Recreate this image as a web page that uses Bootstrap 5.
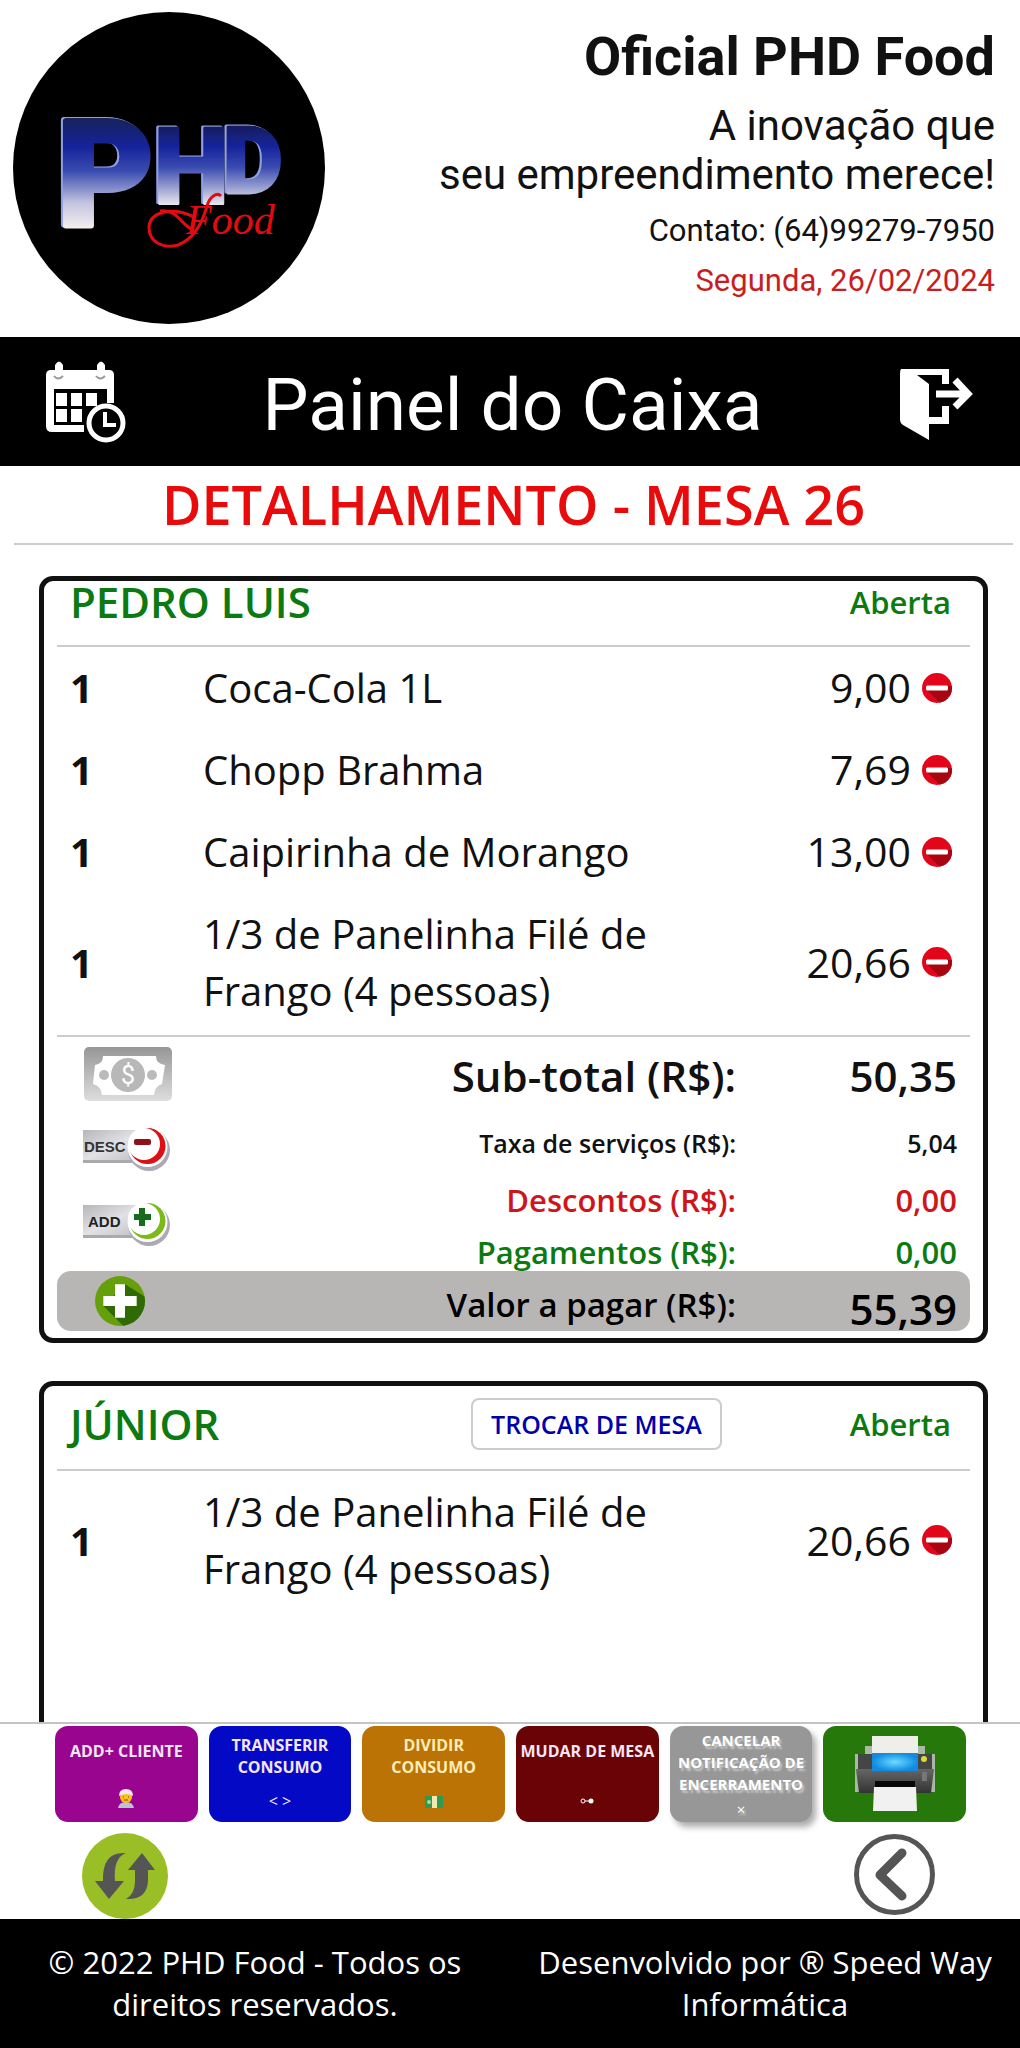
<!DOCTYPE html>
<html lang="pt-BR">
<head>
<meta charset="utf-8">
<meta name="viewport" content="width=device-width, initial-scale=1">
<title>PHD Food - Painel do Caixa</title>
<link href="https://cdn.jsdelivr.net/npm/bootstrap@5.3.0/dist/css/bootstrap.min.css" rel="stylesheet">
<style>
body{font-family:"Open Sans","Noto Sans",sans-serif;color:#111;background:#fff}
svg{display:block;flex:none}
.brandhead,.titlebar{font-family:Roboto,sans-serif}
.brandhead{padding:12px 25px 13px 13px}
.brandname{font-size:54px;line-height:64px;font-weight:700;margin-top:13px}
.slogan{font-size:42px;line-height:49px;margin:12px 0 7px}
.contact{font-size:31px;line-height:50px}
.contact.day{color:#c81e22}
.titlebar{background:#000;color:#fff;height:129px;padding:0 47px 0 46px}
.titlebar h1{font-size:73px;line-height:84px;font-weight:400;margin:0;padding-top:6px}
.content{scrollbar-width:none;min-height:0}
.content::-webkit-scrollbar{display:none}
.heading{font-size:54px;line-height:77px;font-weight:600;color:#e90b0b;border-bottom:2px solid #ccc;margin:0 7px 0 14px;text-align:center}
.tab{border:5px solid #111;border-radius:14px;margin:31px 32px 38px 39px;padding:0 13px}
.tabhead{padding:0 19px 0 13px;border-bottom:2px solid #ccc;height:66px}
.tabhead.tall{height:85px;padding-bottom:7px}
.client{font-size:42px;line-height:42px;font-weight:600;color:#0b7a10;margin:0}
.state{font-size:31px;line-height:42px;font-weight:600;color:#0b7a10}
.swap{font-size:25px;line-height:32px;font-weight:600;color:#00a;border:2px solid #ccc;border-radius:8px;padding:8px 18px;background:#fff;margin-left:auto;margin-right:128px}
.item{padding:12px 18px 13px 13px;font-size:40px;line-height:57px}
.qty{width:133px;font-weight:700}
.dish{width:500px}
.cost{font-size:41px;padding-right:11px}
.lines{border-top:2px solid #ccc;margin-top:3px}
.tools{width:120px;padding:10px 0 0 26px}
.sum{font-weight:600;padding:12px 13px 0 0}
.lbl{width:221px;flex:none;text-align:right}
.s42{font-size:42px;line-height:54px}
.s25{font-size:25px;line-height:36px;padding:22px 0 6px}
.s31{font-size:31px;line-height:38px;padding-top:14px}
.s33{font-size:33px;line-height:52px}
.cut{color:#d0151a}.paid{color:#0b7a10}
.due{background:#b8b6b4;border-radius:14px;height:60px;padding:0 13px 0 38px;color:#000;font-weight:600;margin-bottom:7px}
.plain{border:0;background:none;padding:0}
.dock{border-top:2px solid #c4c4c4;background:#fff}
.actions{gap:11px;padding:2px 54px 0 55px}
.act{flex:1 1 0;height:96px;border:0;border-radius:13px;color:#f5e6f5;font-size:16px;line-height:22px;font-weight:700;padding:0;display:flex;flex-direction:column;align-items:center;justify-content:space-between;padding:8px 0 10px;white-space:nowrap}
.act svg{margin-bottom:4px}
.c1{background:#99058f;padding-top:14px}.c2{background:#0409c6}.c3{background:#ba7304;color:#ffedb8}.c4{background:#690305;padding-top:14px}
.c5{background:#979797;color:#fff;box-shadow:4px 5px 6px #0005;text-shadow:2px 3px 2px #fff7;font-size:15px;padding:3px 0 2px}
.c6{background:#26780a;justify-content:center;padding:0}
.nav2{padding:11px 85px 0 82px}
.foot{background:#000;color:#fff;font-size:31px;line-height:42px;padding:22px 0 23px;text-align:center}
</style>
</head>
<body>
<svg width="0" height="0" class="position-absolute" aria-hidden="true">
  <defs>
    <clipPath id="disc"><circle cx="15" cy="15" r="15"/></clipPath>
    <symbol id="minus" viewBox="0 0 30 30"><circle cx="15" cy="15" r="15" fill="#e3061a"/><path clip-path="url(#disc)" d="M5 17L18 30H30V13H26L25 17z" fill="#a80411"/><rect x="4" y="12.500" width="22" height="5" rx="1.500" fill="#fff"/></symbol>
    <linearGradient id="plate" x2="1" y2="1"><stop stop-color="#b5b5ba"/><stop offset=".5" stop-color="#e2e2e6"/><stop offset="1" stop-color="#bcbcc2"/></linearGradient>
  </defs>
</svg>
<div class="vh-100 d-flex flex-column">
  <header>
    <div class="brandhead d-flex justify-content-between">
      <svg width="312" height="312" viewBox="13 12 312 312" role="img" aria-label="PHD Food">
        <defs><linearGradient id="chrome" gradientUnits="userSpaceOnUse" x1="0" y1="114" x2="0" y2="228"><stop stop-color="#1b2050"/><stop offset=".28" stop-color="#14229a"/><stop offset=".5" stop-color="#3a4bb0"/><stop offset=".78" stop-color="#c3c4e0"/><stop offset="1" stop-color="#f4eeee"/></linearGradient>
        <linearGradient id="chrome2" gradientUnits="userSpaceOnUse" x1="0" y1="120" x2="0" y2="206"><stop stop-color="#191d48"/><stop offset=".3" stop-color="#14229a"/><stop offset=".55" stop-color="#3a4bb0"/><stop offset="1" stop-color="#f0ecf0"/></linearGradient>
        <filter id="edge"><feDropShadow dx="-2" dy="-1" stdDeviation=".5" flood-color="#8e9fe6"/></filter></defs>
        <circle cx="169" cy="168" r="156"/>
        <text font-family="Roboto,sans-serif" font-weight="900" stroke-width="6" stroke-linejoin="round" filter="url(#edge)"><tspan x="58" y="225" font-size="146" fill="url(#chrome)" stroke="url(#chrome)">P</tspan><tspan x="154" y="203" font-size="106" fill="url(#chrome2)" stroke="url(#chrome2)" stroke-width="3">H</tspan><tspan x="223" y="193" font-size="92" fill="url(#chrome2)" stroke="url(#chrome2)" stroke-width="3">D</tspan></text>
        <path d="M194 217C172 206 150 212 149 227C149 243 164 249 178 245C194 239 202 224 207 206C210 196 217 192 221 196" fill="none" stroke="#e30b12" stroke-width="3"/>
        <path d="M160 211C178 208 184 230 194 229" fill="none" stroke="#e30b12" stroke-width="3"/>
        <text x="186" y="234" font-family="Liberation Serif,serif" font-style="italic" font-size="42" fill="#e30b12">Food</text>
      </svg>
      <div class="text-end">
        <div class="brandname">Oficial PHD Food</div>
        <div class="slogan">A inovação que<br>seu empreendimento merece!</div>
        <div class="contact">Contato: (64)99279-7950</div>
        <div class="contact day">Segunda, 26/02/2024</div>
      </div>
    </div>
    <div class="titlebar d-flex align-items-center justify-content-between">
      <button class="plain" aria-label="Agenda"><svg width="80" height="82" viewBox="0 0 80 82"><path d="M5 9h4V4q4-7 8 0v5h34V4q4-7 8 0v5h4q5 0 5 5v28h-7V28H8v36h30v7H6q-6 0-6-6V14q0-5 5-5z" fill="#fff"/><path d="M10 32h11v13H10zM25 32h11v13H25zM40 32h11v13H40zM10 48h11v13H10zM25 48h11v13H25z" fill="#fff"/><path d="M8 15q4 5 9 0M50 15q4 5 9 0" stroke="#999" stroke-width="2" fill="none"/><circle cx="60" cy="62" r="17" fill="#000" stroke="#fff" stroke-width="5"/><path d="M59 51v13h11" fill="none" stroke="#fff" stroke-width="4"/></svg></button>
      <h1>Painel do Caixa</h1>
      <button class="plain pt-1" aria-label="Sair"><svg width="74" height="72" viewBox="0 0 74 72"><path d="M2 1H50V16H43V7H18L30 16V49H43V38H50V56H30V72L4 57Q1 55 1 52V6Q1 2 2 1z" fill="#fff"/><path d="M37 26H68M56 12L69 26L56 39" fill="none" stroke="#fff" stroke-width="7"/></svg></button>
    </div>
  </header>
  <main class="content flex-grow-1 overflow-auto">
    <h2 class="heading">DETALHAMENTO - MESA 26</h2>
    <section class="tab">
      <div class="tabhead d-flex justify-content-between align-items-start"><h3 class="client">PEDRO LUIS</h3><span class="state">Aberta</span></div>
      <div class="item d-flex align-items-center"><span class="qty">1</span><span class="dish">Coca-Cola 1L</span><span class="cost ms-auto">9,00</span><button class="plain" aria-label="Remover"><svg width="30" height="30"><use href="#minus"/></svg></button></div>
      <div class="item d-flex align-items-center"><span class="qty">1</span><span class="dish">Chopp Brahma</span><span class="cost ms-auto">7,69</span><button class="plain" aria-label="Remover"><svg width="30" height="30"><use href="#minus"/></svg></button></div>
      <div class="item d-flex align-items-center"><span class="qty">1</span><span class="dish">Caipirinha de Morango</span><span class="cost ms-auto">13,00</span><button class="plain" aria-label="Remover"><svg width="30" height="30"><use href="#minus"/></svg></button></div>
      <div class="item d-flex align-items-center"><span class="qty">1</span><span class="dish">1/3 de Panelinha Filé de Frango (4 pessoas)</span><span class="cost ms-auto">20,66</span><button class="plain" aria-label="Remover"><svg width="30" height="30"><use href="#minus"/></svg></button></div>
      <div class="lines d-flex">
        <div class="tools d-flex flex-column">
          <button class="plain" aria-label="Pagamento"><svg width="90" height="55" viewBox="0 0 90 55"><defs><linearGradient id="bill" x2="0" y2="1"><stop stop-color="#969696"/><stop offset="1" stop-color="#dedede"/></linearGradient></defs><rect x="1" width="88" height="54" rx="5" fill="url(#bill)"/><path d="M20 9H73Q73 17 82 18L79 37Q72 39 71 48H19Q18 39 10 37L12 18Q20 17 20 9z" fill="#fff"/><circle cx="45" cy="28" r="17" fill="#b8b8b8"/><circle cx="21" cy="28" r="5" fill="#bbb"/><circle cx="69" cy="28" r="5" fill="#bbb"/><text x="45" y="37" text-anchor="middle" font-family="Roboto,sans-serif" font-size="25" fill="#fff">$</text></svg></button>
          <button class="plain mt-4" aria-label="Desconto"><svg width="90" height="47" viewBox="0 0 90 47"><rect y="5" width="62" height="32" fill="#aaa"/><rect y="4" width="62" height="30" fill="url(#plate)"/><circle cx="66" cy="24" r="21" fill="#aaa9b5"/><circle cx="64.500" cy="21" r="20" fill="#fff"/><circle cx="64.500" cy="20" r="18" fill="#dc1015"/><circle cx="61" cy="18" r="16" fill="#fff"/><rect x="51" y="13" width="17" height="6" rx="2" fill="#8d1117"/><text x="1" y="26" font-family="Liberation Sans,sans-serif" font-weight="700" font-size="15" fill="#333">DESC</text></svg></button>
          <button class="plain mt-4 pt-1" aria-label="Acréscimo"><svg width="90" height="47" viewBox="0 0 90 47"><rect y="5" width="62" height="32" fill="#aaa"/><rect y="4" width="62" height="30" fill="url(#plate)"/><circle cx="66" cy="24" r="21" fill="#aaa9b5"/><circle cx="64.500" cy="21" r="20" fill="#fff"/><circle cx="64.500" cy="20" r="18" fill="#7cba1b"/><circle cx="61" cy="18" r="16" fill="#fff"/><path d="M51 16H68M59 7V25" stroke="#156c1b" stroke-width="6"/><text x="5" y="26" font-family="Liberation Sans,sans-serif" font-weight="700" font-size="15" fill="#222">ADD</text></svg></button>
        </div>
        <div class="sum flex-grow-1">
          <div class="d-flex justify-content-end s42"><span>Sub-total (R$):</span><span class="lbl">50,35</span></div>
          <div class="d-flex justify-content-end s25"><span>Taxa de serviços (R$):</span><span class="lbl">5,04</span></div>
          <div class="d-flex justify-content-end s31 cut"><span>Descontos (R$):</span><span class="lbl">0,00</span></div>
          <div class="d-flex justify-content-end s31 paid"><span>Pagamentos (R$):</span><span class="lbl">0,00</span></div>
        </div>
      </div>
      <div class="due d-flex align-items-center">
        <button class="plain me-auto" aria-label="Adicionar item"><svg width="50" height="50" viewBox="0 0 30 30"><circle cx="15" cy="15" r="15" fill="#65a00b"/><path clip-path="url(#disc)" d="M5 18L18 31H31V13L18 5z" fill="#2f6a04"/><path d="M12 5H18V12H25V18H18V25H12V18H5V12H12z" fill="#fff"/></svg></button>
        <span class="s33 pt-2">Valor a pagar (R$):</span><span class="lbl s42 pt-3">55,39</span>
      </div>
    </section>
    <section class="tab pb-5">
      <div class="tabhead tall d-flex align-items-center"><h3 class="client">JÚNIOR</h3><button class="swap">TROCAR DE MESA</button><span class="state">Aberta</span></div>
      <div class="item d-flex align-items-center mb-5 pb-5"><span class="qty">1</span><span class="dish">1/3 de Panelinha Filé de Frango (4 pessoas)</span><span class="cost ms-auto">20,66</span><button class="plain" aria-label="Remover"><svg width="30" height="30"><use href="#minus"/></svg></button></div>
    </section>
  </main>
  <div class="dock">
    <div class="actions d-flex">
      <button class="act c1"><span>ADD+ CLIENTE</span><svg width="16" height="19" viewBox="0 0 16 19"><path d="M0 19q1-6 8-6t8 6z" fill="#b9c4cb"/><circle cx="8" cy="8" r="6" fill="#fbbf24"/><path d="M1 7q0-7 7-7t7 7q-7-4-14 0z" fill="#f1e8ef"/><path d="M5 8h1M10 8h1M6 11h4" stroke="#7b4b12"/></svg></button>
      <button class="act c2"><span>TRANSFERIR<br>CONSUMO</span><span class="fw-normal">&lt; &gt;</span></button>
      <button class="act c3"><span>DIVIDIR<br>CONSUMO</span><svg width="18" height="12" viewBox="0 0 18 12"><rect width="18" height="12" fill="#2f9b50"/><rect x="7" width="5" height="12" fill="#f2e8b0"/><circle cx="4" cy="6" r="2" fill="#a7dc9f"/></svg></button>
      <button class="act c4"><span>MUDAR DE MESA</span><svg class="mb-2" width="14" height="6" viewBox="0 0 14 6"><circle cx="3" cy="3" r="2" fill="none" stroke="#fff"/><path d="M5 3h5" stroke="#fff"/><circle cx="11" cy="3" r="2.500" fill="#fff"/></svg></button>
      <button class="act c5"><span>CANCELAR<br>NOTIFICAÇÃO DE<br>ENCERRAMENTO</span><span class="fw-normal">×</span></button>
      <button class="act c6" aria-label="Imprimir"><svg class="m-0" width="84" height="76" viewBox="0 0 84 76"><defs><linearGradient id="ink" x2="0" y2="1"><stop stop-color="#666"/><stop offset="1" stop-color="#333"/></linearGradient><radialGradient id="glow"><stop stop-color="#6cdcff"/><stop offset="1" stop-color="#108be0"/></radialGradient></defs><path d="M12 10h60v8h10v38H2V18h10z" fill="#a9b9a5"/><rect x="19" y="0" width="46" height="20" fill="#efefea"/><rect x="5" y="18" width="74" height="15" fill="#454545"/><path d="M3 33H81L78 57H6z" fill="url(#ink)"/><rect x="19" y="17" width="46" height="18" fill="url(#glow)"/><rect x="22" y="45" width="40" height="6" fill="#080808"/><path d="M21 51H63L64 75H20z" fill="#f1f1f1"/><circle cx="71" cy="23" r="3" fill="#dcdc32"/><rect x="69" y="36" width="5" height="9" fill="#777"/></svg></button>
    </div>
    <div class="nav2 d-flex justify-content-between">
      <button class="plain" aria-label="Atualizar"><svg width="86" height="86" viewBox="0 0 86 86"><circle cx="43" cy="43" r="43" fill="#9abf26"/><path d="M44 20Q20 18 21 48H13L27 66L42 48H33Q31 25 44 20z" fill="#555"/><path d="M60 20L46 37H53V48Q53 61 44 66Q65 67 66 48V37H73z" fill="#555"/></svg></button>
      <button class="plain pb-1" aria-label="Voltar"><svg width="81" height="81" viewBox="0 0 81 81"><circle cx="40.500" cy="40.500" r="38" fill="none" stroke="#555" stroke-width="5"/><path d="M48 19L26 41L48 62" fill="none" stroke="#555" stroke-width="9" stroke-linecap="round" stroke-linejoin="round"/></svg></button>
    </div>
  </div>
  <footer class="foot"><div class="row g-0"><div class="col-6 px-5">© 2022 PHD Food - Todos os direitos reservados.</div><div class="col-6 px-4">Desenvolvido por ® Speed Way Informática</div></div></footer>
</div>
<script src="https://cdn.jsdelivr.net/npm/bootstrap@5.3.0/dist/js/bootstrap.bundle.min.js"></script>
</body>
</html>
